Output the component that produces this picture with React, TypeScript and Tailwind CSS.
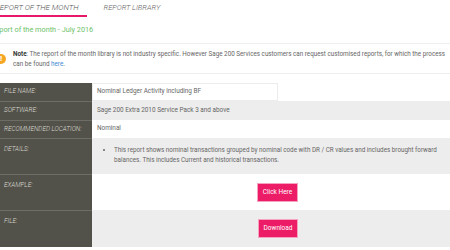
import React from 'react';

const rows = [
  { label: 'FILE NAME:', h: 'h-[18px]', bg: 'bg-white' },
  { label: 'SOFTWARE:', h: 'h-[19px]', bg: 'bg-[#ededed]' },
  { label: 'RECOMMENDED LOCATION:', h: 'h-[18px]', bg: 'bg-white' },
];

export default function App() {
  return (
    <div className="w-[450px] h-[250px] overflow-hidden bg-white font-['Roboto','Liberation_Sans',sans-serif]">
      {/* Tabs */}
      <div className="flex items-start h-[17px] ml-[-10px]">
        <div className="pl-[5px] pr-[8px] border-b-2 border-[#e8196b] text-[7.8px] leading-[15px] italic font-light text-[#555] whitespace-nowrap">
          REPORT OF THE MONTH
        </div>
        <div className="ml-[17px] text-[7.5px] leading-[15px] italic font-light text-[#666] whitespace-nowrap">
          REPORT LIBRARY
        </div>
      </div>

      {/* Title */}
      <div className="ml-[-9px] mt-[7px] text-[7.3px] leading-[12px] text-[#6ec26a] whitespace-nowrap">
        Report of the month - July 2016
      </div>

      {/* Note */}
      <div className="mt-[7px] border-t border-b border-[#eeeeee] flex items-center h-[31px]">
        <div className="ml-[-4px] w-[10px] h-[10px] rounded-full bg-[#f5a623] text-white text-[8px] font-bold leading-[10px] text-center shrink-0">
          !
        </div>
        <p className="ml-[7px] text-[6.3px] leading-[10px] text-[#666]">
          <span className="font-bold text-[#333]">Note</span>: The report of the month library is not industry specific. However Sage 200 Services customers can request customised reports, for which the process can be found <span className="text-[#3a8bd0]">here</span>.
        </p>
      </div>

      {/* Table */}
      <div className="mt-[9px] text-[6.4px]">
        {rows.map((r, i) => (
          <div key={r.label} className={`flex ${r.h}`}>
            <div className={`w-[92px] shrink-0 bg-[#53524a] ${i === 0 ? '' : 'border-t border-[#6e6d65]'} pl-[4px] flex items-center italic font-light text-[#ddddd6] whitespace-nowrap`}>
              {r.label}
            </div>
            <div className={`flex-1 ${r.bg} flex items-center`}>
              {i === 0 ? (
                <div className="w-[186px] h-full border border-[#ececec] flex items-center pl-[4px] text-[#666]">
                  Nominal Ledger Activity including BF
                </div>
              ) : (
                <div className="pl-[5px] text-[#666]">
                  {i === 1 ? 'Sage 200 Extra 2010 Service Pack 3 and above' : 'Nominal'}
                </div>
              )}
            </div>
          </div>
        ))}

        {/* Details */}
        <div className="flex h-[36px]">
          <div className="w-[92px] shrink-0 bg-[#53524a] border-t border-[#6e6d65] pl-[4px] pt-[6px] italic font-light text-[#ddddd6]">
            DETAILS:
          </div>
          <div className="flex-1 bg-[#ededed] pt-[7px] pl-[15px] pr-[1px]">
            <ul className="list-disc pl-[7px] leading-[10px] text-[6.3px] text-[#666]">
              <li>
                This report shows nominal transactions grouped by nominal code with DR / CR values and includes brought forward balances. This includes Current and historical transactions.
              </li>
            </ul>
          </div>
        </div>

        {/* Example */}
        <div className="flex h-[36px]">
          <div className="w-[92px] shrink-0 bg-[#53524a] border-t border-[#6e6d65] pl-[4px] pt-[6px] italic font-light text-[#ddddd6]">
            EXAMPLE:
          </div>
          <div className="flex-1 bg-white pl-[165px] pt-[9px]">
            <button className="w-[41px] h-[19px] bg-[#ec1c67] border border-[#f5a3c1] text-white text-[6.5px]">
              Click Here
            </button>
          </div>
        </div>

        {/* File */}
        <div className="flex h-[37px]">
          <div className="w-[92px] shrink-0 bg-[#53524a] border-t border-[#6e6d65] pl-[4px] pt-[6px] italic font-light text-[#ddddd6]">
            FILE:
          </div>
          <div className="flex-1 bg-[#ededed] pl-[166px] pt-[9px]">
            <button className="w-[40px] h-[19px] bg-[#ec1c67] border border-[#f5a3c1] text-white text-[6.5px]">
              Download
            </button>
          </div>
        </div>
      </div>
    </div>
  );
}
